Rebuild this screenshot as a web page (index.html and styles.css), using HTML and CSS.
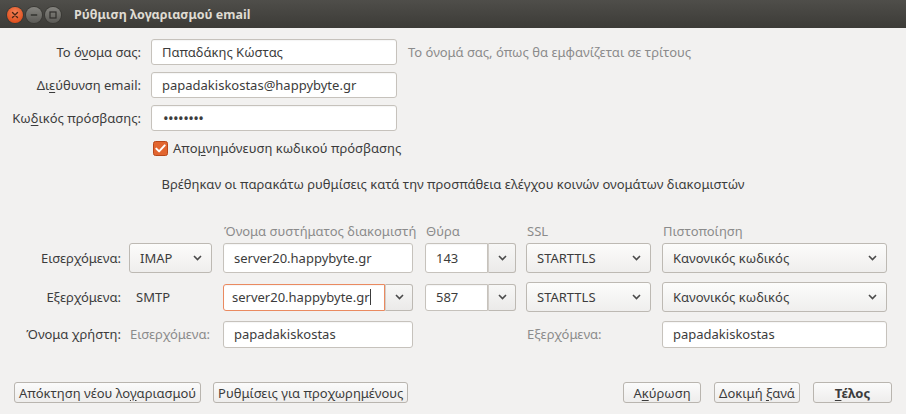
FILE: index.html
```html
<!DOCTYPE html>
<html lang="el">
<head>
<meta charset="utf-8">
<title>Ρύθμιση λογαριασμού email</title>
<link rel="stylesheet" href="styles.css">
</head>
<body>
<div class="window">
  <header class="titlebar">
    <div class="controls">
      <span class="wbtn close"><svg width="8" height="8" viewBox="0 0 8 8"><path d="M1.5 1.5l5 5M6.5 1.5l-5 5" stroke="#4a2614" stroke-width="1.4" stroke-linecap="round"/></svg></span>
      <span class="wbtn min"><svg width="8" height="8" viewBox="0 0 8 8"><path d="M0.8 4h6.4" stroke="#2f2e2b" stroke-width="1.4"/></svg></span>
      <span class="wbtn max"><svg width="8" height="8" viewBox="0 0 8 8"><rect x="1" y="1" width="6" height="6" fill="none" stroke="#2f2e2b" stroke-width="1.2"/></svg></span>
    </div>
    <span class="title">Ρύθμιση λογαριασμού email</span>
  </header>

  <main class="content">
    <div class="form">
      <label class="lbl">Το ό<u>ν</u>ομα σας:</label>
      <div class="entry">Παπαδάκης Κώστας</div>
      <span class="hint">Το όνομά σας, όπως θα εμφανίζεται σε τρίτους</span>

      <label class="lbl">Δι<u>ε</u>ύθυνση email:</label>
      <div class="entry">papadakiskostas@happybyte.gr</div>
      <span></span>

      <label class="lbl">Κω<u>δ</u>ικός πρόσβασης:</label>
      <div class="entry dots">••••••••</div>
      <span></span>

      <span></span>
      <div class="check">
        <svg class="box" width="15" height="15" viewBox="0 0 15 15"><rect x="0.5" y="0.5" width="14" height="14" rx="2" fill="#e2652f" stroke="#b8471a"/><path d="M3.3 7.6l2.8 2.8 5.6-6" fill="none" stroke="#fff" stroke-width="2" stroke-linecap="round" stroke-linejoin="round"/></svg>
        <span>Απο<u>μ</u>νημόνευση κωδικού πρόσβασης</span>
      </div>
    </div>

    <p class="info">Βρέθηκαν οι παρακάτω ρυθμίσεις κατά την προσπάθεια ελέγχου κοινών ονομάτων διακομιστών</p>

    <div class="servers">
      <div class="srow head">
        <span></span>
        <span></span>
        <span class="colh">Όνομα συστήματος διακομιστή</span>
        <span class="colh">Θύρα</span>
        <span class="colh">SSL</span>
        <span class="colh">Πιστοποίηση</span>
      </div>

      <div class="srow r1">
        <span class="slbl">Εισερχόμενα:</span>
        <div class="select w-proto"><span>IMAP</span><svg class="chev" width="9" height="6" viewBox="0 0 9 6"><path d="M1 1l3.5 3.5L8 1" fill="none" stroke="#4a4a4a" stroke-width="1.6"/></svg></div>
        <div class="entry tall w-host">server20.happybyte.gr</div>
        <div class="combo tall w-port">
          <div class="entry part">143</div>
          <div class="drop"><svg class="chev" width="9" height="6" viewBox="0 0 9 6"><path d="M1 1l3.5 3.5L8 1" fill="none" stroke="#4a4a4a" stroke-width="1.6"/></svg></div>
        </div>
        <div class="select w-ssl"><span>STARTTLS</span><svg class="chev" width="9" height="6" viewBox="0 0 9 6"><path d="M1 1l3.5 3.5L8 1" fill="none" stroke="#4a4a4a" stroke-width="1.6"/></svg></div>
        <div class="select w-auth"><span>Κανονικός κωδικός</span><svg class="chev" width="9" height="6" viewBox="0 0 9 6"><path d="M1 1l3.5 3.5L8 1" fill="none" stroke="#4a4a4a" stroke-width="1.6"/></svg></div>
      </div>

      <div class="srow r2">
        <span class="slbl">Εξερχόμενα:</span>
        <span class="proto">SMTP</span>
        <div class="combo w-host">
          <div class="entry part focus">server20.happybyte.gr<span class="caret"></span></div>
          <div class="drop"><svg class="chev" width="9" height="6" viewBox="0 0 9 6"><path d="M1 1l3.5 3.5L8 1" fill="none" stroke="#4a4a4a" stroke-width="1.6"/></svg></div>
        </div>
        <div class="combo w-port">
          <div class="entry part">587</div>
          <div class="drop"><svg class="chev" width="9" height="6" viewBox="0 0 9 6"><path d="M1 1l3.5 3.5L8 1" fill="none" stroke="#4a4a4a" stroke-width="1.6"/></svg></div>
        </div>
        <div class="select w-ssl"><span>STARTTLS</span><svg class="chev" width="9" height="6" viewBox="0 0 9 6"><path d="M1 1l3.5 3.5L8 1" fill="none" stroke="#4a4a4a" stroke-width="1.6"/></svg></div>
        <div class="select w-auth"><span>Κανονικός κωδικός</span><svg class="chev" width="9" height="6" viewBox="0 0 9 6"><path d="M1 1l3.5 3.5L8 1" fill="none" stroke="#4a4a4a" stroke-width="1.6"/></svg></div>
      </div>

      <div class="srow r3">
        <span class="slbl">Όνομα χρήστη:</span>
        <span class="sub">Εισερχόμενα:</span>
        <div class="entry user w-host">papadakiskostas</div>
        <span></span>
        <span class="sub">Εξερχόμενα:</span>
        <div class="entry user w-auth">papadakiskostas</div>
      </div>
    </div>

    <footer class="actions">
      <div class="group left">
        <button class="btn b-new">Απόκτηση νέου λο<u>γ</u>αριασμού</button>
        <button class="btn b-adv">Ρυθμίσεις για προ<u>χ</u>ωρημένους</button>
      </div>
      <div class="group right">
        <button class="btn b-cancel">Α<u>κ</u>ύρωση</button>
        <button class="btn b-retry">Δοκιμή <u>ξ</u>ανά</button>
        <button class="btn b-done"><u>Τ</u>έλος</button>
      </div>
    </footer>
  </main>
</div>
</body>
</html>
```

FILE: styles.css
```css
* { box-sizing: border-box; }
html, body { margin: 0; padding: 0; }
body {
  background: #f2f1f0;
  font-family: "Noto Sans", "DejaVu Sans", sans-serif;
  font-size: 13px;
  color: #3c3c3c;
  overflow: hidden;
}
u { text-decoration: underline; text-underline-offset: 2px; }

.window { display: flex; flex-direction: column; height: 414px; }

/* title bar */
.titlebar {
  height: 28px;
  flex-shrink: 0;
  display: flex;
  align-items: center;
  padding-left: 7px;
  background: linear-gradient(#4f4e4a, #3c3b37);
}
.controls { display: flex; gap: 3px; margin-top: 2px; }
.wbtn {
  width: 16px; height: 16px; border-radius: 50%;
  display: flex; align-items: center; justify-content: center;
}
.wbtn.close {
  background: radial-gradient(circle at 50% 35%, #f4845a, #df4f1d 75%);
  box-shadow: 0 0 0 1px #3a3935;
}
.wbtn.min, .wbtn.max {
  background: linear-gradient(#85847f, #5b5a56);
  box-shadow: 0 0 0 1px #3a3935;
}
.title {
  margin-left: 13px;
  color: #dfdbd2;
  font-weight: bold;
  font-size: 12.5px;
  margin-top: 1px;
}

/* content */
.content {
  flex: 1;
  display: flex;
  flex-direction: column;
  padding: 11px 14px 11px 0;
}

.form {
  display: grid;
  grid-template-columns: 141px 246px 1fr;
  grid-template-rows: 26px 26px 26px 20px;
  column-gap: 10px;
  row-gap: 7px;
  align-items: center;
}
.lbl { text-align: right; }
.hint { color: #8b8b8b; padding-left: 1px; }

.entry {
  height: 26px;
  background: #fff;
  border: 1px solid #c6c2bc;
  border-radius: 3px;
  padding: 0 10px;
  display: flex;
  align-items: center;
  white-space: nowrap;
  box-shadow: inset 0 1px 1px rgba(0,0,0,0.04);
}
.entry.dots { font-size: 15px; letter-spacing: -0.6px; padding-left: 11px; }
.entry.tall { height: 30px; }
.entry.user { height: 27px; }

.check {
  grid-column: 2 / 4;
  display: flex;
  align-items: center;
  gap: 5px;
  padding-left: 2px;
  white-space: nowrap;
}
.check .box { flex-shrink: 0; }

.info {
  margin: 18px 0 0 14px;
  line-height: 16px;
  text-align: center;
}

/* server table */
.servers { margin-top: 30px; display: flex; flex-direction: column; }
.srow {
  display: grid;
  grid-template-columns: 129px 94px 202px 101px 136px 225px;
  align-items: center;
  justify-items: start;
}
.srow.head { height: 18px; margin-bottom: 3px; }
.srow.r1 { height: 30px; margin-bottom: 9px; }
.srow.r2 { height: 30px; margin-bottom: 8px; }
.srow.r3 { height: 28px; }
.colh { color: #8b8b8b; padding-left: 1px; }
.slbl { justify-self: stretch; text-align: right; padding-right: 8px; }
.proto { padding-left: 7px; }
.sub { color: #8b8b8b; padding-left: 1px; }

.w-proto { width: 83px; }
.w-host { width: 190px; }
.w-port { width: 91px; }
.w-ssl { width: 125px; }
.w-auth { width: 225px; }

.select {
  height: 30px;
  border: 1px solid #bdb9b3;
  border-radius: 3px;
  background: linear-gradient(#fcfcfb, #efeeed);
  display: flex;
  align-items: center;
  justify-content: space-between;
  padding: 0 9px 0 10px;
  white-space: nowrap;
}

.combo { display: flex; height: 27px; }
.combo.tall { height: 30px; }
.combo .part {
  flex: 1;
  min-width: 0;
  height: 100%;
  border-radius: 3px 0 0 3px;
  padding-right: 4px;
}
.combo .part.focus { border-color: #ea8a60; padding-left: 8px; }
.combo .drop {
  width: 28px;
  flex-shrink: 0;
  height: 100%;
  border: 1px solid #bdb9b3;
  border-left-color: #d2cec9;
  border-radius: 0 3px 3px 0;
  background: linear-gradient(#f7f7f6, #ebeae9);
  display: flex;
  align-items: center;
  justify-content: center;
}
.caret {
  display: inline-block;
  width: 1px;
  height: 16px;
  background: #3c3c3c;
}

/* actions */
.actions {
  margin-top: auto;
  display: flex;
  justify-content: space-between;
  padding-left: 14px;
}
.group { display: flex; }
.group.left { gap: 12px; }
.group.right { gap: 13px; }
.btn {
  height: 21px;
  font: inherit;
  color: #3c3c3c;
  border: 1px solid #b9b5af;
  border-radius: 3px;
  background: linear-gradient(#fbfbfb, #eeedec);
  padding: 0 4px;
  line-height: 18px;
  white-space: nowrap;
}
.b-cancel { width: 78px; }
.b-retry { width: 86px; }
.b-done { width: 79px; font-weight: bold; }
```
